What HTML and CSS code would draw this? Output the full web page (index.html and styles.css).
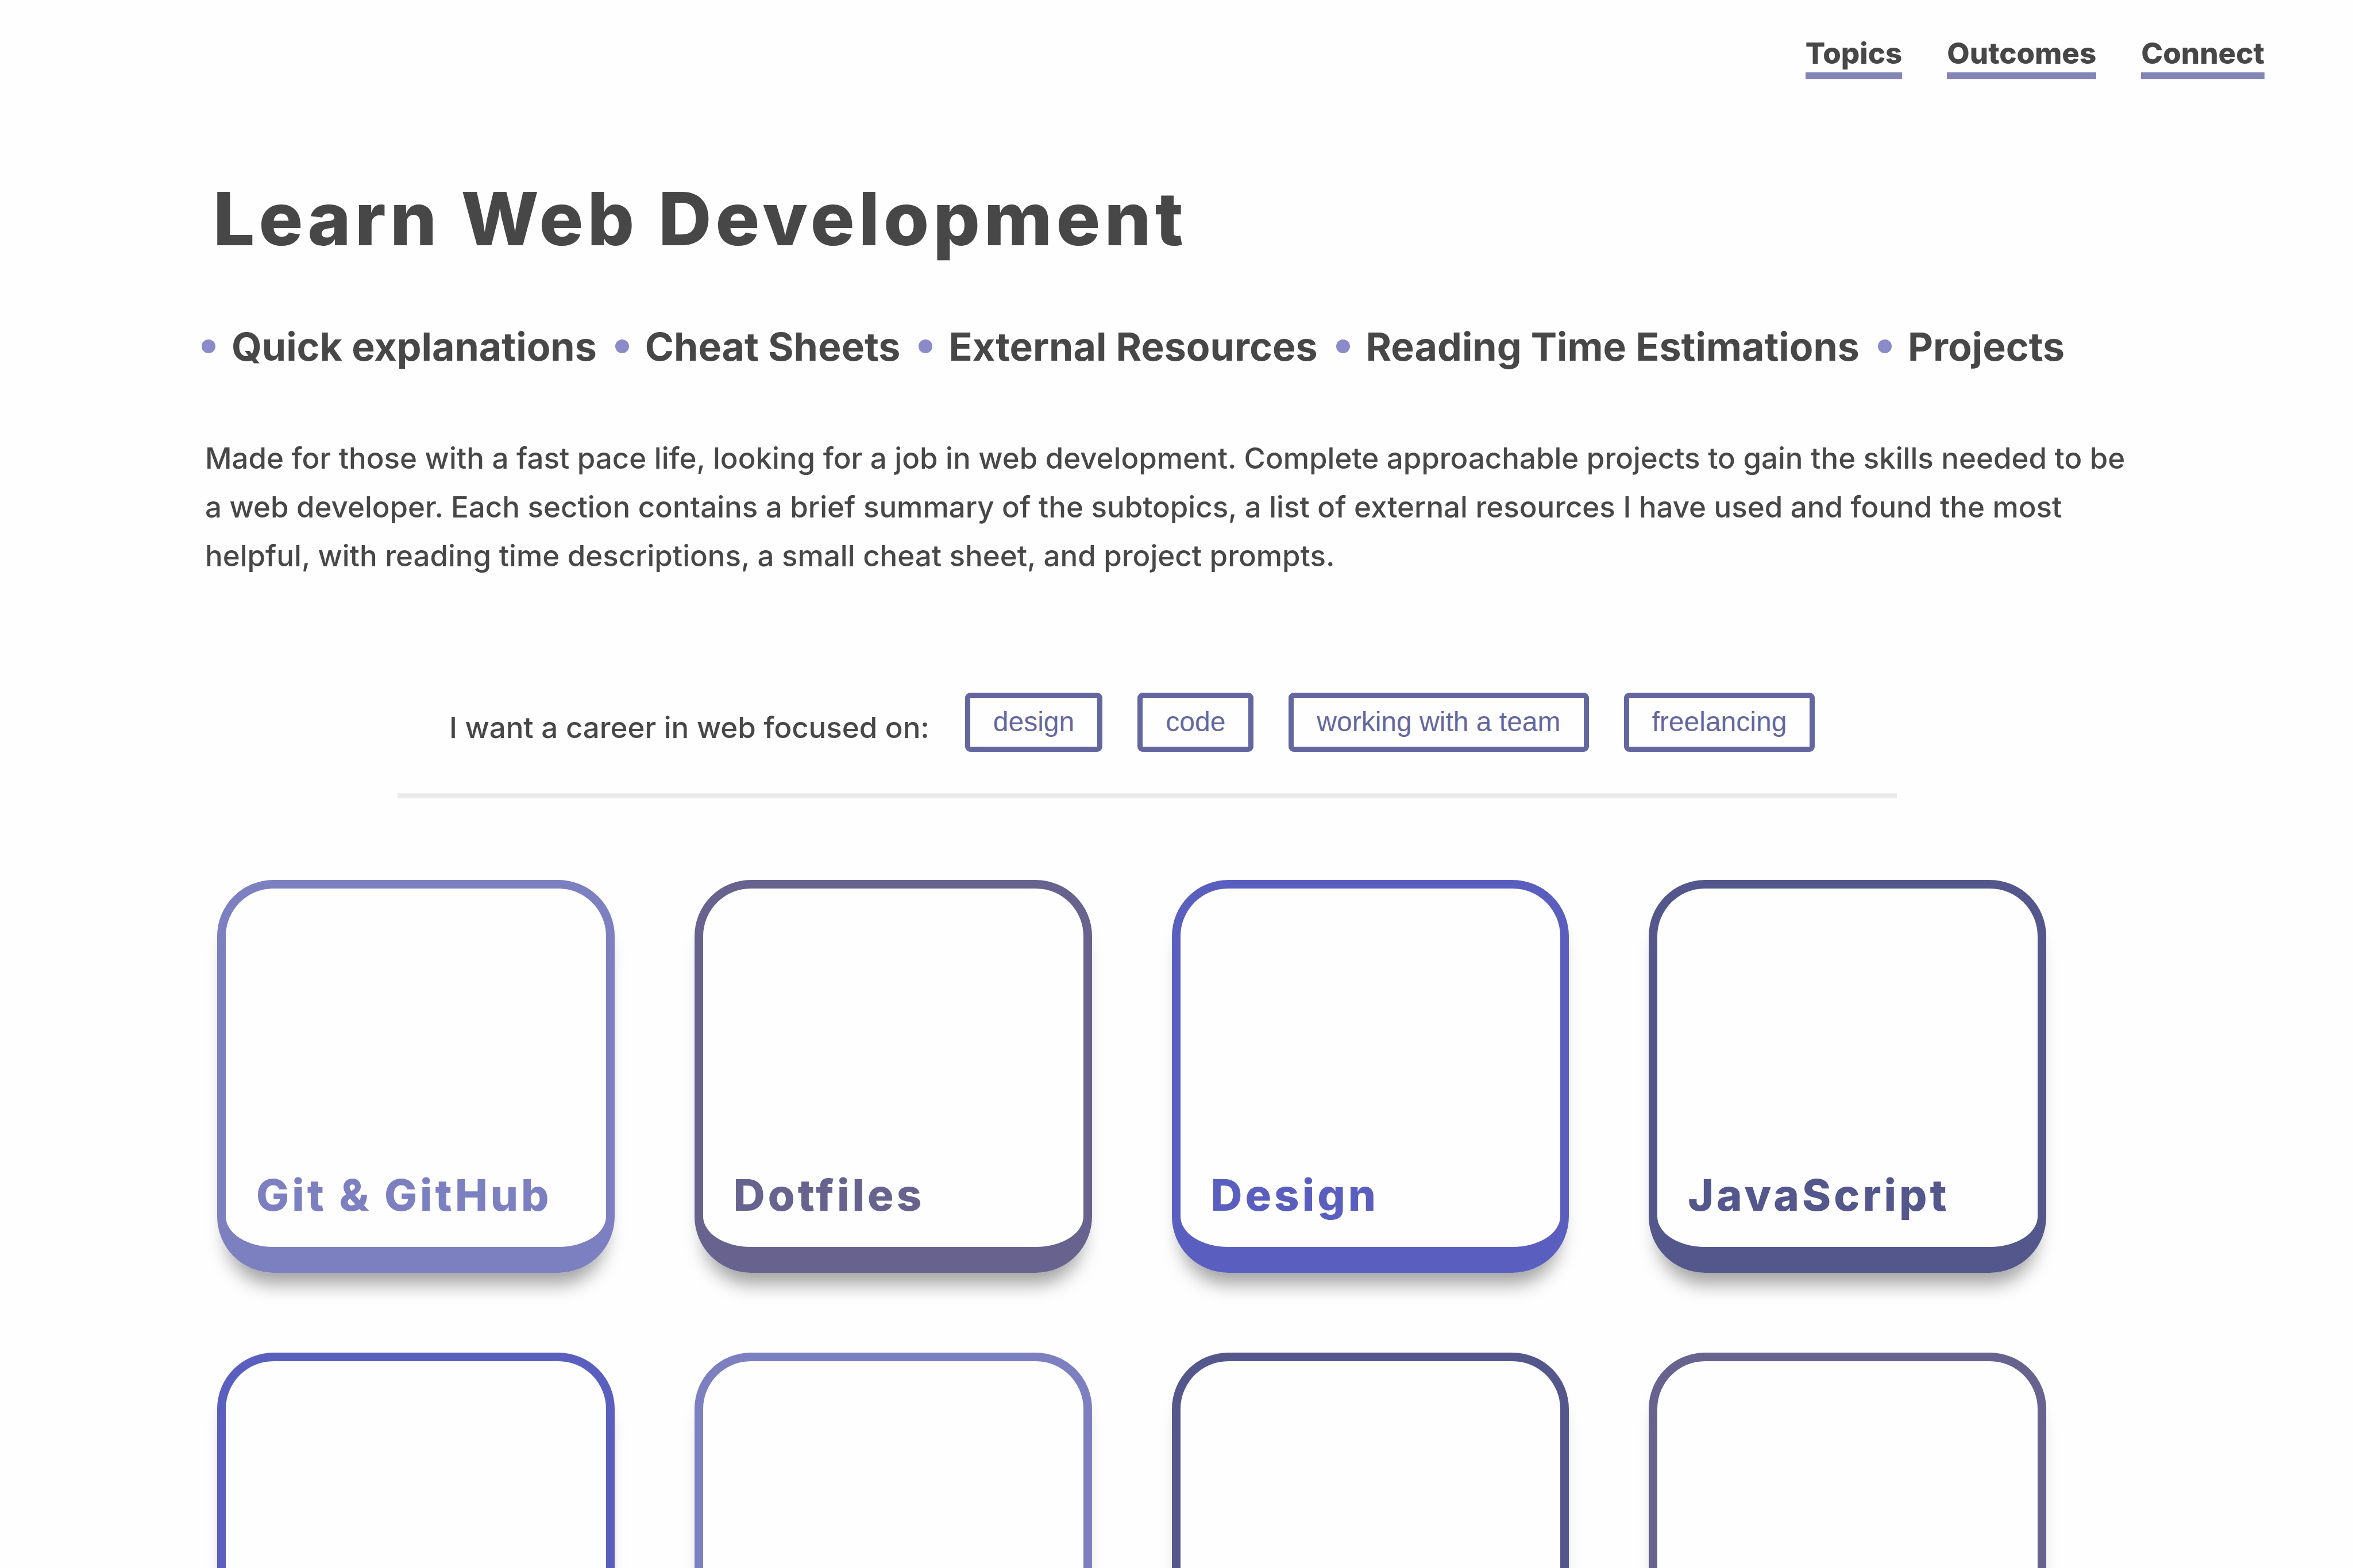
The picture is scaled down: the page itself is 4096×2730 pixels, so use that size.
FILE: index.html
```html
<!DOCTYPE html>
<html lang="en">
<head>
<meta charset="utf-8">
<meta name="viewport" content="width=device-width, initial-scale=1">
<title>Learn Web Development</title>
<link rel="stylesheet" href="styles.css">
</head>
<body>
<header class="site-header">
  <nav class="nav">
    <a class="nav-link" href="#topics">Topics</a>
    <a class="nav-link" href="#outcomes">Outcomes</a>
    <a class="nav-link" href="#connect">Connect</a>
  </nav>
</header>
<main>
  <section class="intro">
    <h1 class="title">Learn Web Development</h1>
    <ul class="features">
      <li class="feature">Quick explanations</li>
      <li class="feature">Cheat Sheets</li>
      <li class="feature">External Resources</li>
      <li class="feature">Reading Time Estimations</li>
      <li class="feature">Projects</li>
    </ul>
    <p class="summary">Made for those with a fast pace life, looking for a job in web development. Complete approachable projects to gain the skills needed to be a web developer. Each section contains a brief summary of the subtopics, a list of external resources I have used and found the most helpful, with reading time descriptions, a small cheat sheet, and project prompts.</p>
  </section>
  <section class="filter">
    <p class="filter-label" id="focus">I want a career in web focused on:</p>
    <div class="filter-options" role="group" aria-labelledby="focus">
      <button class="chip" type="button">design</button>
      <button class="chip" type="button">code</button>
      <button class="chip" type="button">working with a team</button>
      <button class="chip" type="button">freelancing</button>
    </div>
  </section>
  <section class="topics" id="topics">
    <a class="card lavender" href="#git"><h2 class="card-title">Git &amp; GitHub</h2></a>
    <a class="card plum" href="#dotfiles"><h2 class="card-title">Dotfiles</h2></a>
    <a class="card indigo" href="#design"><h2 class="card-title">Design</h2></a>
    <a class="card navy" href="#javascript"><h2 class="card-title">JavaScript</h2></a>
    <div class="card indigo"></div>
    <div class="card lavender"></div>
    <div class="card navy"></div>
    <div class="card plum"></div>
  </section>
</main>
</body>
</html>
```
FILE: styles.css
```css
* {
  box-sizing: border-box;
}

html {
  scrollbar-width: none;
}

body {
  margin: 0;
  background: #fefefe;
  color: #474747;
  font-family: Inter, "Open Sans", sans-serif;
  font-size: 51px;
}

h1, h2, p, ul {
  margin: 0;
  padding: 0;
}

a {
  color: inherit;
  text-decoration: none;
}

.site-header {
  padding: 63px 154px 0;
}

.nav {
  display: flex;
  justify-content: flex-end;
  gap: 78px;
}

.nav-link {
  padding-bottom: 3px;
  border-bottom: 12px solid #8485b5;
  font-weight: 800;
  line-height: 60px;
}

.intro {
  padding: 168px 379px 0 357px;
}

.title {
  padding-left: 14px;
  font-size: 128px;
  font-weight: 800;
  letter-spacing: 7px;
  line-height: 150px;
}

.features {
  display: flex;
  gap: 32px;
  margin-top: 107px;
  margin-left: -6px;
  list-style: none;
  white-space: nowrap;
}

.feature {
  display: flex;
  align-items: center;
  gap: 28px;
  font-size: 68px;
  font-weight: 700;
  line-height: 80px;
}

.feature::before {
  content: "";
  width: 24px;
  height: 24px;
  border-radius: 50%;
  background: #8a8bc8;
}

.summary {
  margin-top: 112px;
  font-weight: 500;
  line-height: 85px;
}

.filter {
  display: flex;
  align-items: flex-end;
  gap: 62px;
  margin: 196px 794px 0 692px;
  padding: 0 90px 72px;
  border-bottom: 9px solid #ebebeb;
  white-space: nowrap;
}

.filter-label {
  margin-bottom: 12px;
  font-weight: 500;
  line-height: 60px;
}

.filter-options {
  display: flex;
  gap: 61px;
}

.chip {
  padding: 14px 40px 15px;
  border: 9px solid #64679f;
  border-radius: 9px;
  background: #fefefe;
  color: #64679f;
  font-family: "Liberation Sans", Arial, sans-serif;
  font-size: 48px;
  line-height: 56px;
}

.topics {
  display: grid;
  grid-template-columns: repeat(4, 1fr);
  grid-auto-rows: 684px;
  gap: 139px;
  padding: 142px 534px 139px 378px;
}

.card {
  display: flex;
  align-items: flex-end;
  padding: 0 53px 46px;
  border: 15px solid;
  border-bottom-width: 45px;
  border-radius: 98px;
  box-shadow: 0 36px 32px -16px rgba(0, 0, 0, 0.36);
}

.card-title {
  font-size: 76px;
  font-weight: 800;
  letter-spacing: 5px;
  line-height: 90px;
  white-space: nowrap;
}

.lavender {
  color: #7c80c0;
}

.plum {
  color: #67628e;
}

.indigo {
  color: #5a5fbf;
}

.navy {
  color: #54578c;
}
```
